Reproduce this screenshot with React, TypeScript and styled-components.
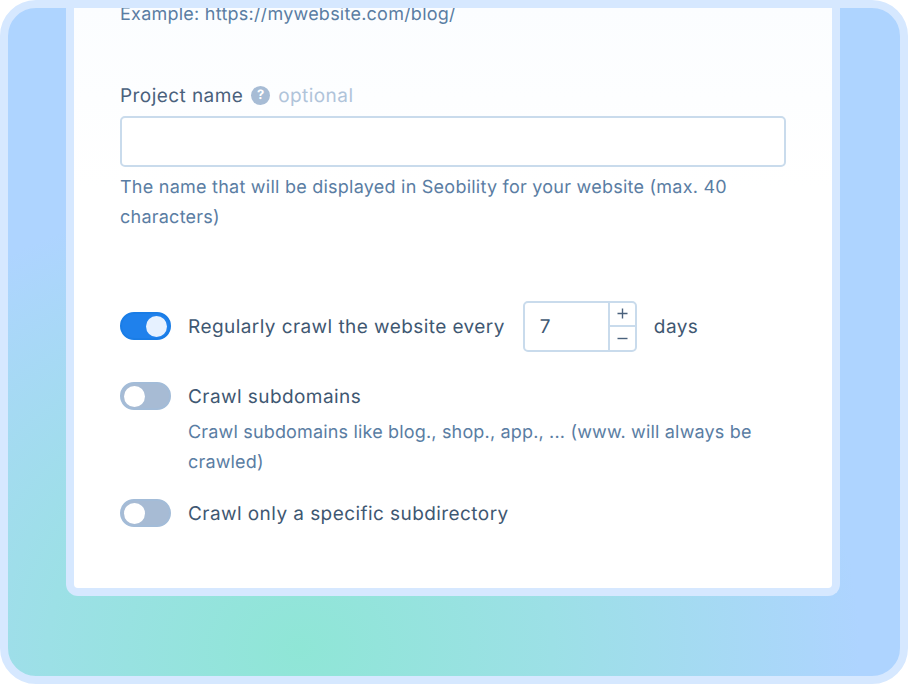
import React, { useState } from "react";
import styled, { createGlobalStyle } from "styled-components";

const GlobalStyle = createGlobalStyle`
  html, body {
    margin: 0;
    padding: 0;
    background: #fff;
  }
  body {
    font-family: Inter, "Liberation Sans", sans-serif;
    text-rendering: geometricPrecision;
  }
`;

const Frame = styled.div`
  box-sizing: border-box;
  width: 908px;
  height: 684px;
  border: 8px solid #d6e8ff;
  border-radius: 36px;
  overflow: hidden;
  background: radial-gradient(ellipse 560px 460px at 292px 640px, #8fe6d6 0%, #9ce0e6 45%, #aed4ff 100%), #aed4ff;
`;

const Card = styled.div`
  box-sizing: border-box;
  width: 774px;
  height: 588px;
  margin-left: 58px;
  padding: 0 46px;
  background: linear-gradient(180deg, #fbfdff 0, #fff 180px);
  border: 8px solid #d6e8ff;
  border-top: none;
  border-radius: 0 0 12px 12px;
  display: flex;
  flex-direction: column;
`;

const Hint = styled.p`
  margin: 0;
  font-size: 18px;
  line-height: 30px;
  letter-spacing: 0.24px;
  color: #5a7da3;
`;

const TopHint = styled(Hint)`
  margin-top: -8px;
`;

const LabelRow = styled.div`
  display: flex;
  align-items: center;
  gap: 8px;
  margin-top: 50px;
  height: 30px;
  font-size: 19px;
  letter-spacing: 0.43px;
  color: #4a617c;
`;

const Optional = styled.span`
  color: #b0c4da;
`;

const HelpIcon = styled.span`
  width: 19px;
  height: 19px;
  border-radius: 50%;
  background: #a7bcd5;
  color: #fff;
  font-size: 13px;
  font-weight: 700;
  display: flex;
  align-items: center;
  justify-content: center;
`;

const TextInput = styled.input`
  box-sizing: border-box;
  width: 666px;
  height: 51px;
  margin: 6px 0;
  border: 2px solid #c9dbec;
  border-radius: 5px;
  background: #fff;
  outline: none;
`;

const Row = styled.div<{ $top: number }>`
  display: flex;
  align-items: center;
  height: 30px;
  margin-top: ${(p) => p.$top}px;
`;

const Toggle = styled.span<{ $on?: boolean }>`
  box-sizing: border-box;
  flex: none;
  width: 51px;
  height: 28px;
  padding: 1.5px 2px;
  border-radius: 14px;
  border: 2px solid ${(p) => (p.$on ? "#1a7de6" : "#a3bcd8")};
  background: ${(p) => (p.$on ? "#1f81ec" : "#a7bbd4")};
  display: flex;
  justify-content: ${(p) => (p.$on ? "flex-end" : "flex-start")};
  &::after {
    content: "";
    width: 21px;
    height: 21px;
    border-radius: 50%;
    background: ${(p) => (p.$on ? "#e6f1ff" : "#fff")};
  }
`;

const RowLabel = styled.span`
  margin-left: 17px;
  font-size: 19px;
  letter-spacing: 0.43px;
  color: #3f5872;
`;

const Stepper = styled.div`
  box-sizing: border-box;
  width: 114px;
  height: 51px;
  margin: 0 17px 0 18px;
  border: 2px solid #c9dbec;
  border-radius: 5px;
  background: #fff;
  display: flex;
  flex: none;
`;

const StepValue = styled.span`
  flex: 1;
  padding-left: 15px;
  font-size: 19px;
  line-height: 47px;
  color: #3f5872;
`;

const StepButtons = styled.div`
  width: 25px;
  border-left: 2px solid #c9dbec;
  display: flex;
  flex-direction: column;
`;

const StepButton = styled.span`
  flex: 1;
  display: flex;
  align-items: center;
  justify-content: center;
  color: #4a617c;
  & + & {
    border-top: 2px solid #c9dbec;
  }
`;

const Days = styled.span`
  font-size: 19px;
  letter-spacing: 0.43px;
  color: #3f5872;
`;

const SubHint = styled(Hint)`
  margin: 7px 0 0 68px;
  letter-spacing: 0.17px;
`;

export default function App() {
  const [name, setName] = useState("");
  return (
    <Frame>
      <GlobalStyle />
      <Card>
        <TopHint>Example: https://mywebsite.com/blog/</TopHint>
        <LabelRow>
          Project name
          <HelpIcon>?</HelpIcon>
          <Optional>optional</Optional>
        </LabelRow>
        <TextInput value={name} onChange={(e) => setName(e.target.value)} />
        <Hint>The name that will be displayed in Seobility for your website (max. 40 characters)</Hint>
        <Row $top={78}>
          <Toggle $on />
          <RowLabel>Regularly crawl the website every</RowLabel>
          <Stepper>
            <StepValue>7</StepValue>
            <StepButtons>
              <StepButton>
                <svg width="11" height="11" viewBox="0 0 11 11">
                  <path d="M5.5 0.5v10M0.5 5.5h10" stroke="currentColor" strokeWidth="1.4" fill="none" />
                </svg>
              </StepButton>
              <StepButton>
                <svg width="11" height="11" viewBox="0 0 11 11">
                  <path d="M0.5 5.5h10" stroke="currentColor" strokeWidth="1.4" fill="none" />
                </svg>
              </StepButton>
            </StepButtons>
          </Stepper>
          <Days>days</Days>
        </Row>
        <Row $top={40}>
          <Toggle />
          <RowLabel>Crawl subdomains</RowLabel>
        </Row>
        <SubHint>Crawl subdomains like blog., shop., app., ... (www. will always be crawled)</SubHint>
        <Row $top={20}>
          <Toggle />
          <RowLabel>Crawl only a specific subdirectory</RowLabel>
        </Row>
      </Card>
    </Frame>
  );
}
